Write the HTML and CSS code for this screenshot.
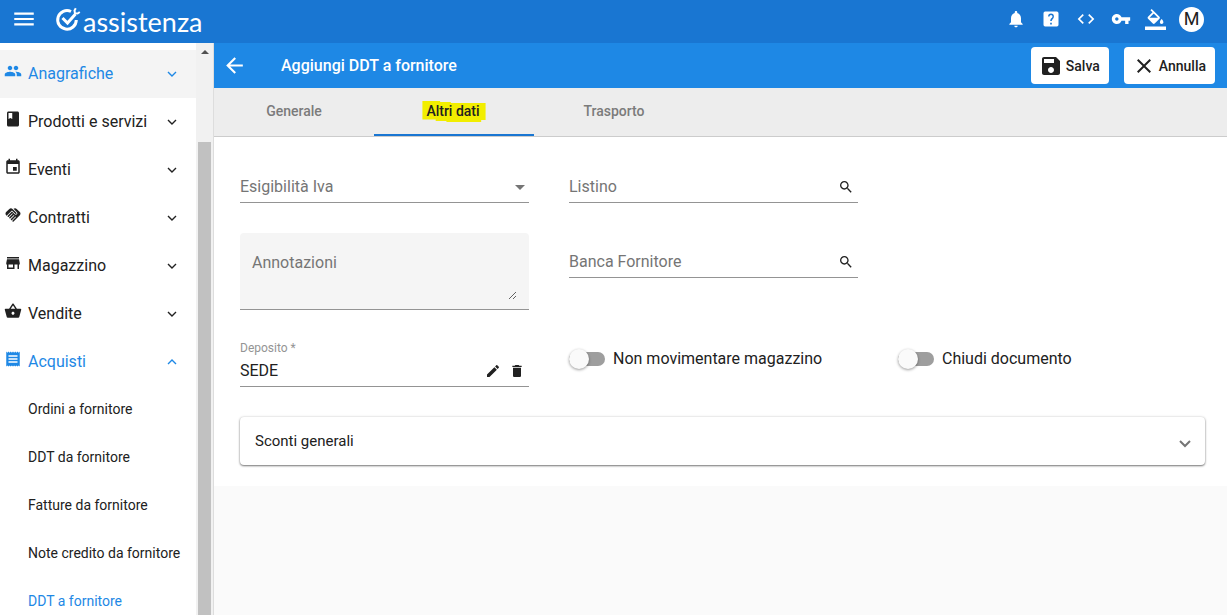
FILE: index.html
```html
<!DOCTYPE html>
<html lang="it">
<head>
    <meta charset="UTF-8">
    <meta name="viewport" content="width=device-width, initial-scale=1.0">
    <title>Aggiungi DDT a fornitore</title>
    <link rel="stylesheet" href="styles.css">
</head>
<body>
    <header class="topbar">
        <button class="icon-btn menu-btn" aria-label="Menu">
            <svg width="26" height="26" viewBox="0 0 24 24"><path d="M3 18h18v-2H3v2zm0-5h18v-2H3v2zm0-7v2h18V6H3z"/></svg>
        </button>
        <a href="#" class="logo">
            <svg width="26" height="26" viewBox="0 0 26 26" fill="none" stroke="#fff" stroke-width="3">
                <path d="M16 5.500A9.300 9.300 0 1 0 21.300 14"/>
                <path d="M7.500 12l5 5L20.500 8"/>
                <path d="M20.800 2.200l-1.300 2.300.4 2.700 2.700.3 2.200-1.500" stroke-width="2"/>
            </svg>
            <span>assistenza</span>
        </a>
        <div class="topbar-actions">
            <button class="icon-btn" aria-label="Notifiche">
                <svg width="20" height="20" viewBox="0 0 24 24"><path d="M12 22c1.100 0 2-.9 2-2h-4c0 1.100.89 2 2 2zm6-6v-5c0-3.070-1.640-5.640-4.500-6.320V4c0-.83-.67-1.500-1.500-1.500s-1.500.67-1.500 1.500v.68C7.630 5.360 6 7.920 6 11v5l-2 2v1h16v-1l-2-2z"/></svg>
            </button>
            <button class="icon-btn" aria-label="Aiuto">
                <svg width="20" height="20" viewBox="0 0 24 24"><path fill-rule="evenodd" d="M5 3h14a2 2 0 0 1 2 2v14a2 2 0 0 1-2 2H5a2 2 0 0 1-2-2V5a2 2 0 0 1 2-2zm6 13.500v2h2v-2h-2zM12 5.500A3.500 3.500 0 0 0 8.500 9h1.700a1.800 1.800 0 1 1 3.600 0c0 1.800-2.700 2.200-2.700 5.500h1.800c0-2.200 2.600-2.600 2.600-5.500A3.500 3.500 0 0 0 12 5.500z"/></svg>
            </button>
            <button class="icon-btn" aria-label="Codice">
                <svg width="20" height="20" viewBox="0 0 24 24"><path d="M9.400 16.600L4.800 12l4.600-4.600L8 6l-6 6 6 6 1.400-1.400zm5.200 0l4.600-4.600-4.600-4.600L16 6l6 6-6 6-1.400-1.400z"/></svg>
            </button>
            <button class="icon-btn" aria-label="Password">
                <svg width="20" height="20" viewBox="0 0 24 24"><path d="M12.650 10C11.830 7.670 9.610 6 7 6c-3.310 0-6 2.690-6 6s2.690 6 6 6c2.610 0 4.830-1.670 5.650-4H17v4h4v-4h2v-4H12.650zM7 14c-1.100 0-2-.9-2-2s.9-2 2-2 2 .9 2 2-.9 2-2 2z"/></svg>
            </button>
            <button class="icon-btn" aria-label="Tema">
                <svg width="21" height="21" viewBox="0 0 24 24"><path d="M16.560 8.940L7.620 0 6.210 1.410l2.380 2.380-5.150 5.150c-.59.59-.59 1.540 0 2.120l5.500 5.500c.29.29.68.44 1.060.44s.77-.15 1.060-.44l5.500-5.500c.59-.58.59-1.530 0-2.120zM5.210 10L10 5.210 14.790 10H5.210zM19 11.500s-2 2.170-2 3.500c0 1.100.9 2 2 2s2-.9 2-2c0-1.330-2-3.500-2-3.500zM0 20h24v4H0z"/></svg>
            </button>
            <button class="avatar" aria-label="Profilo">M</button>
        </div>
    </header>

    <div class="layout">
        <aside class="sidebar">
            <nav class="nav">
                <a href="#" class="nav-item active shaded">
                    <svg class="nav-icon" viewBox="0 0 24 24"><path d="M16 11c1.660 0 2.990-1.340 2.990-3S17.660 5 16 5s-3 1.340-3 3 1.340 3 3 3zm-8 0c1.660 0 2.990-1.340 2.990-3S9.660 5 8 5 5 6.340 5 8s1.340 3 3 3zm0 2c-2.330 0-7 1.170-7 3.500V19h14v-2.500C15 14.170 10.330 13 8 13zm8 0c-.29 0-.62.020-.97.050 1.160.84 1.970 1.970 1.970 3.450V19h6v-2.500c0-2.330-4.670-3.500-7-3.500z"/></svg>
                    <span>Anagrafiche</span>
                    <svg class="chevron" viewBox="0 0 12 12"><path d="M2 4l4 4 4-4"/></svg>
                </a>
                <a href="#" class="nav-item">
                    <svg class="nav-icon" viewBox="0 0 24 24"><path d="M18 2H6c-1.100 0-2 .9-2 2v16c0 1.100.9 2 2 2h12c1.100 0 2-.9 2-2V4c0-1.100-.9-2-2-2zM6 4h5v8l-2.500-1.500L6 12V4z"/></svg>
                    <span>Prodotti e servizi</span>
                    <svg class="chevron" viewBox="0 0 12 12"><path d="M2 4l4 4 4-4"/></svg>
                </a>
                <a href="#" class="nav-item">
                    <svg class="nav-icon" viewBox="0 0 24 24"><path d="M17 12h-5v5h5v-5zM16 1v2H8V1H6v2H5c-1.110 0-2 .9-2 2v14c0 1.100.89 2 2 2h14c1.100 0 2-.9 2-2V5c0-1.100-.9-2-2-2h-1V1h-2zm3 18H5V8h14v11z"/></svg>
                    <span>Eventi</span>
                    <svg class="chevron" viewBox="0 0 12 12"><path d="M2 4l4 4 4-4"/></svg>
                </a>
                <a href="#" class="nav-item">
                    <svg class="nav-icon" viewBox="0 0 24 24"><path d="M16.480 10.410c-.39.39-1.040.39-1.430 0l-4.470-4.460-7.050 7.040-.66-.63c-1.170-1.170-1.170-3.070 0-4.240l4.240-4.240c1.170-1.170 3.070-1.170 4.240 0L16.480 9c.39.39.39 1.020 0 1.410zm.7-2.120c.78.78.78 2.050 0 2.830-1.270 1.270-2.610.22-2.830 0l-3.760-3.760-5.570 5.570c-.39.39-.39 1.020 0 1.410.39.39 1.020.39 1.420 0l4.620-4.620.71.71-4.620 4.620c-.39.39-.39 1.020 0 1.410.39.39 1.020.39 1.420 0l4.620-4.620.71.71-4.620 4.620c-.39.39-.39 1.020 0 1.410.39.39 1.020.39 1.410 0l4.620-4.620.71.71-4.620 4.620c-.39.39-.39 1.020 0 1.410.39.39 1.020.39 1.410 0l8.320-8.340c1.170-1.170 1.170-3.070 0-4.240l-4.240-4.240c-1.150-1.150-3.010-1.170-4.180-.06l4.470 4.470z"/></svg>
                    <span>Contratti</span>
                    <svg class="chevron" viewBox="0 0 12 12"><path d="M2 4l4 4 4-4"/></svg>
                </a>
                <a href="#" class="nav-item">
                    <svg class="nav-icon" viewBox="0 0 24 24"><path d="M20 4H4v2h16V4zm1 10v-2l-1-5H4l-1 5v2h1v6h10v-6h4v6h2v-6h1zm-9 4H6v-4h6v4z"/></svg>
                    <span>Magazzino</span>
                    <svg class="chevron" viewBox="0 0 12 12"><path d="M2 4l4 4 4-4"/></svg>
                </a>
                <a href="#" class="nav-item">
                    <svg class="nav-icon" viewBox="0 0 24 24"><path d="M17.210 9l-4.380-6.560c-.19-.28-.51-.42-.83-.42-.32 0-.64.14-.83.43L6.790 9H2c-.55 0-1 .45-1 1 0 .09.010.18.040.27l2.540 9.270c.23.84 1 1.460 1.920 1.460h13c.92 0 1.690-.62 1.930-1.460l2.540-9.270L23 10c0-.55-.45-1-1-1h-4.790zM9 9l3-4.400L15 9H9zm3 8c-1.100 0-2-.9-2-2s.9-2 2-2 2 .9 2 2-.9 2-2 2z"/></svg>
                    <span>Vendite</span>
                    <svg class="chevron" viewBox="0 0 12 12"><path d="M2 4l4 4 4-4"/></svg>
                </a>
                <a href="#" class="nav-item active">
                    <svg class="nav-icon" viewBox="0 0 24 24"><path d="M18 17H6v-2h12v2zm0-4H6v-2h12v2zm0-4H6V7h12v2zM3 22l1.500-1.500L6 22l1.500-1.500L9 22l1.500-1.500L12 22l1.500-1.500L15 22l1.500-1.500L18 22l1.500-1.500L21 22V2l-1.500 1.500L18 2l-1.500 1.500L15 2l-1.500 1.500L12 2l-1.500 1.500L9 2 7.500 3.500 6 2 4.500 3.500 3 2v20z"/></svg>
                    <span>Acquisti</span>
                    <svg class="chevron" viewBox="0 0 12 12"><path d="M2 8l4-4 4 4"/></svg>
                </a>
                <a href="#" class="sub-item">Ordini a fornitore</a>
                <a href="#" class="sub-item">DDT da fornitore</a>
                <a href="#" class="sub-item">Fatture da fornitore</a>
                <a href="#" class="sub-item">Note credito da fornitore</a>
                <a href="#" class="sub-item active">DDT a fornitore</a>
            </nav>
            <div class="scrollbar">
                <div class="scroll-arrow"></div>
                <div class="scroll-thumb"></div>
            </div>
        </aside>

        <main class="content">
            <div class="titlebar">
                <button class="icon-btn back-btn" aria-label="Indietro">
                    <svg width="25" height="25" viewBox="0 0 24 24"><path d="M20 11H7.830l5.590-5.590L12 4l-8 8 8 8 1.410-1.410L7.830 13H20v-2z"/></svg>
                </button>
                <h1>Aggiungi DDT a fornitore</h1>
                <div class="title-actions">
                    <button class="btn">
                        <svg width="24" height="24" viewBox="0 0 24 24"><path d="M17 3H5c-1.110 0-2 .9-2 2v14c0 1.100.89 2 2 2h14c1.100 0 2-.9 2-2V7l-4-4zm-5 16c-1.660 0-3-1.340-3-3s1.340-3 3-3 3 1.340 3 3-1.340 3-3 3zm3-10H5V5h10v4z"/></svg>
                        <span>Salva</span>
                    </button>
                    <button class="btn">
                        <svg width="24" height="24" viewBox="0 0 24 24"><path d="M19 6.410L17.590 5 12 10.590 6.410 5 5 6.410 10.590 12 5 17.590 6.410 19 12 13.410 17.590 19 19 17.590 13.410 12z"/></svg>
                        <span>Annulla</span>
                    </button>
                </div>
            </div>

            <div class="tabs" role="tablist">
                <button class="tab" role="tab">Generale</button>
                <button class="tab selected" role="tab" aria-selected="true"><mark>Altri dati</mark></button>
                <button class="tab" role="tab">Trasporto</button>
            </div>

            <form class="panel">
                <div class="form-grid">
                    <div class="field">
                        <label for="esigibilita">Esigibilità Iva</label>
                        <select id="esigibilita"><option></option></select>
                        <svg class="caret" viewBox="0 0 10 5"><path d="M0 0h10L5 5z"/></svg>
                    </div>
                    <div class="field wide">
                        <label for="listino">Listino</label>
                        <input type="text" id="listino">
                        <button type="button" class="field-btn" aria-label="Cerca listino">
                            <svg width="16" height="16" viewBox="0 0 24 24"><path d="M15.500 14h-.79l-.28-.27C15.410 12.590 16 11.110 16 9.500 16 5.910 13.090 3 9.500 3S3 5.910 3 9.500 5.910 16 9.500 16c1.610 0 3.090-.59 4.230-1.570l.27.28v.79l5 4.990L20.490 19l-4.990-5zm-6 0C7.010 14 5 11.990 5 9.500S7.010 5 9.500 5 14 7.010 14 9.500 11.990 14 9.500 14z"/></svg>
                        </button>
                    </div>

                    <div class="textarea-field">
                        <label for="annotazioni">Annotazioni</label>
                        <textarea id="annotazioni"></textarea>
                    </div>
                    <div class="field wide lowered">
                        <label for="banca">Banca Fornitore</label>
                        <input type="text" id="banca">
                        <button type="button" class="field-btn" aria-label="Cerca banca">
                            <svg width="16" height="16" viewBox="0 0 24 24"><path d="M15.500 14h-.79l-.28-.27C15.410 12.590 16 11.110 16 9.500 16 5.910 13.090 3 9.500 3S3 5.910 3 9.500 5.910 16 9.500 16c1.610 0 3.090-.59 4.230-1.570l.27.28v.79l5 4.990L20.490 19l-4.990-5zm-6 0C7.010 14 5 11.990 5 9.500S7.010 5 9.500 5 14 7.010 14 9.500 11.990 14 9.500 14z"/></svg>
                        </button>
                    </div>

                    <div class="filled-field">
                        <label for="deposito">Deposito *</label>
                        <div class="field">
                            <input type="text" id="deposito" value="SEDE" required>
                            <button type="button" class="field-btn" aria-label="Modifica deposito">
                                <svg width="16" height="16" viewBox="0 0 24 24"><path d="M3 17.250V21h3.750L17.810 9.940l-3.750-3.750L3 17.250zM20.710 7.040c.39-.39.39-1.020 0-1.410l-2.340-2.340c-.39-.39-1.020-.39-1.410 0l-1.830 1.830 3.750 3.750 1.830-1.830z"/></svg>
                            </button>
                            <button type="button" class="field-btn" aria-label="Elimina deposito">
                                <svg width="16" height="16" viewBox="0 0 24 24"><path d="M6 19c0 1.100.9 2 2 2h8c1.100 0 2-.9 2-2V7H6v12zM19 4h-3.500l-1-1h-5l-1 1H5v2h14V4z"/></svg>
                            </button>
                        </div>
                    </div>
                    <label class="toggle">
                        <input type="checkbox">
                        <span>Non movimentare magazzino</span>
                    </label>
                    <label class="toggle">
                        <input type="checkbox">
                        <span>Chiudi documento</span>
                    </label>
                </div>

                <button type="button" class="accordion" aria-expanded="false">
                    <span>Sconti generali</span>
                    <svg width="12" height="12" viewBox="0 0 12 12"><path d="M1 4l5 5 5-5"/></svg>
                </button>
            </form>
        </main>
    </div>
</body>
</html>
```
FILE: styles.css
```css
* {
    box-sizing: border-box;
}
body {
    display: flex;
    flex-direction: column;
    height: 100vh;
    margin: 0;
    overflow: hidden;
    font-family: Roboto, "Liberation Sans", sans-serif;
    font-size: 16px;
    line-height: 20px;
    color: #212121;
    background-color: #fafafa;
}
button, input, select, textarea {
    font: inherit;
    color: inherit;
    margin: 0;
    padding: 0;
    border: none;
    background: none;
    border-radius: 0;
}
button {
    cursor: pointer;
}
a {
    color: inherit;
    text-decoration: none;
}
svg {
    display: block;
    flex-shrink: 0;
    fill: currentColor;
}

/* Top bar */
.topbar {
    display: flex;
    align-items: center;
    flex-shrink: 0;
    height: 43px;
    padding: 0 23px 5px 11px;
    color: #fff;
    background-color: #1976d2;
}
.icon-btn {
    display: flex;
    align-items: center;
    justify-content: center;
    width: 23px;
    color: #fff;
}
.menu-btn {
    width: 26px;
}
.logo {
    display: flex;
    align-items: center;
    gap: 2px;
    margin-left: 18px;
    font-family: Lato, sans-serif;
    font-size: 27px;
    line-height: 32px;
}
.logo svg {
    fill: none;
}
.logo span {
    padding-top: 5px;
}
.topbar-actions {
    display: flex;
    align-items: center;
    gap: 12px;
    margin-left: auto;
}
.avatar {
    width: 25px;
    height: 25px;
    border-radius: 50%;
    font-size: 18px;
    color: #212121;
    background-color: #fff;
}

/* Sidebar */
.layout {
    display: flex;
    flex: 1;
    min-height: 0;
}
.sidebar {
    display: flex;
    flex-shrink: 0;
    width: 214px;
    border-right: 1px solid #ddd;
    background-color: #fff;
}
.nav {
    flex: 1;
    padding-top: 7px;
    overflow: hidden;
}
.nav-item {
    display: flex;
    align-items: center;
    gap: 6px;
    height: 48px;
    padding: 0 18px 0 4px;
}
.nav-item.shaded {
    background-color: #f4f4f4;
}
.nav-icon {
    width: 18px;
    height: 18px;
    margin-bottom: 6px;
}
.chevron {
    width: 12px;
    height: 12px;
    margin-left: auto;
    fill: none;
    stroke: currentColor;
    stroke-width: 1.4;
}
.sub-item {
    display: block;
    padding: 13px 0 15px 28px;
    font-size: 14px;
    white-space: nowrap;
}
.active {
    color: #1e88e5;
}
.scrollbar {
    display: flex;
    flex-direction: column;
    align-items: center;
    width: 17px;
    background-color: #f1f1f1;
}
.scroll-arrow {
    margin: 7px 0 88px;
    border: 4px solid transparent;
    border-top: none;
    border-bottom-color: #505050;
}
.scroll-thumb {
    flex: 1;
    width: 13px;
    background-color: #c1c1c1;
}

/* Title bar */
.content {
    flex: 1;
    min-width: 0;
}
.titlebar {
    display: flex;
    align-items: center;
    height: 45px;
    padding: 0 12px 0 8px;
    color: #fff;
    background-color: #1e88e5;
}
.back-btn {
    width: 25px;
}
.titlebar h1 {
    margin: 0 0 0 34px;
    font-size: 16px;
    font-weight: 500;
}
.title-actions {
    display: flex;
    gap: 15px;
    margin-left: auto;
}
.btn {
    display: flex;
    align-items: center;
    gap: 3px;
    height: 37px;
    padding: 0 9px 0 8px;
    border-radius: 4px;
    font-size: 14px;
    font-weight: 500;
    color: #212121;
    background-color: #fff;
}

/* Tabs */
.tabs {
    display: flex;
    height: 49px;
    border-bottom: 1px solid #ccc;
    background-color: #ededed;
}
.tab {
    width: 160px;
    border-bottom: 2px solid transparent;
    font-size: 14px;
    font-weight: 500;
    color: #7b7b7b;
}
.tab.selected {
    border-bottom-color: #1976d2;
    color: #212121;
}
.tab mark {
    padding: 2px 6px 3px 4px;
    color: inherit;
    background-color: #f2ee00;
    clip-path: polygon(0 0, 28% 0, 28% 1px, 45% 1px, 45% 2px, 100% 2px, 100% 90%, 93% 90%, 93% 100%, 38% 100%, 38% 95%, 21% 95%, 21% 88%, 0 88%);
}

/* Form */
.panel {
    padding: 33px 22px 21px 26px;
    background-color: #fff;
}
.form-grid {
    display: grid;
    grid-template-columns: repeat(3, 1fr);
    align-items: start;
    gap: 30px 40px;
    margin: 0 18px 30px 0;
}
.field {
    display: flex;
    align-items: center;
    gap: 8px;
    height: 33px;
    padding: 2px 4px 0 0;
    border-bottom: 1px solid #949494;
}
.field label, .textarea-field label {
    color: #757575;
}
.field input, .field select {
    flex: 1;
    min-width: 0;
    height: 20px;
    outline: none;
    appearance: none;
}
.wide {
    grid-column: span 2;
    width: calc(50% - 20px);
}
.lowered {
    margin-top: 12px;
}
.caret {
    width: 10px;
    height: 5px;
    color: #757575;
}
.textarea-field {
    display: flex;
    flex-direction: column;
    padding: 20px 12px 9px;
    border-bottom: 1px solid #949494;
    border-radius: 4px 4px 0 0;
    background-color: #f5f5f5;
}
.textarea-field textarea {
    height: 27px;
    outline: none;
    resize: vertical;
}
.filled-field label {
    display: block;
    height: 14px;
    font-size: 12px;
    line-height: 16px;
    color: #949494;
}
.toggle {
    display: flex;
    align-items: center;
    gap: 8px;
    padding-top: 9px;
}
.toggle input {
    display: flex;
    align-items: center;
    width: 36px;
    height: 14px;
    border-radius: 7px;
    background-color: #9e9e9e;
    appearance: none;
}
.toggle input::before {
    content: "";
    width: 20px;
    height: 20px;
    border-radius: 50%;
    background-color: #fafafa;
    box-shadow: 0 1px 3px rgba(0, 0, 0, 0.4);
}
.toggle input:checked::before {
    margin-left: 16px;
}
.accordion {
    display: flex;
    align-items: center;
    justify-content: space-between;
    width: 100%;
    height: 48px;
    padding: 0 14px 0 15px;
    border-radius: 4px;
    font-size: 15px;
    background-color: #fff;
    box-shadow: 0 1px 2px rgba(0, 0, 0, 0.5), 0 0 3px rgba(0, 0, 0, 0.15);
}
.accordion svg {
    margin-top: 4px;
    fill: none;
    stroke: #757575;
    stroke-width: 2;
}
```
